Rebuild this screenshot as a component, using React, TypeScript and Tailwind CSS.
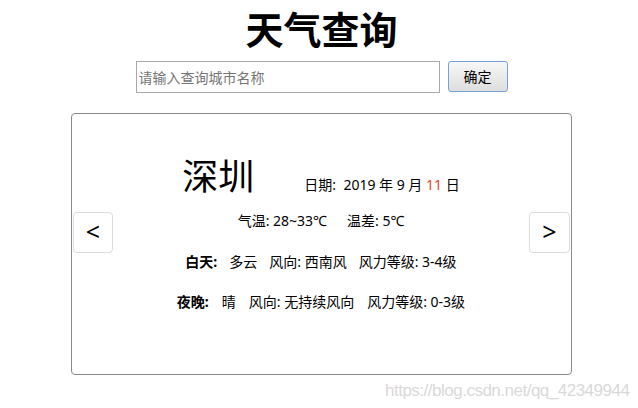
export default function App() {
  return (
    <div
      className="relative h-[408px] w-full bg-white pl-[5px] text-black"
      style={{ fontFamily: '"Noto Sans", "Noto Sans CJK SC", sans-serif' }}
    >
      {/* Title */}
      <h1
        className="pt-[3px] text-center text-[38px] font-bold leading-[50px]"
        style={{ fontFamily: '"Noto Sans CJK SC", sans-serif' }}
      >
        天气查询
      </h1>

      {/* Search row */}
      <div className="mt-[8px] flex items-center justify-center gap-[8px]">
        <input
          type="text"
          placeholder="请输入查询城市名称"
          className="h-[32px] w-[304px] border border-[#a9a9a9] px-[2px] text-[14px] outline-none placeholder:text-[#757575]"
        />
        <button className="-mt-[2px] h-[31px] w-[60px] rounded-[3px] border border-[#7a9fd6] bg-linear-to-b from-[#f7f7f7] to-[#dedede] text-[14px]">
          确定
        </button>
      </div>

      {/* Weather card */}
      <div className="mx-auto mt-[20px] flex h-[262px] w-[501px] rounded-[4px] border border-[#8a8a8a] px-[1px]">
        <button className="mt-[98px] flex h-[41px] w-[40px] shrink-0 items-center justify-center rounded-[4px] border border-[#dcdcdc] bg-white pb-[2px] text-[25px] leading-none">
          &lt;
        </button>

        <div className="flex flex-1 flex-col items-center pt-[38px] text-[14px]">
          <div className="flex items-baseline gap-[50px]">
            <span className="text-[36px] leading-[44px]" style={{ fontFamily: '"Noto Sans CJK SC", sans-serif' }}>
              深圳
            </span>
            <span>
              日期:&nbsp;&nbsp;2019 年 9 月 <span className="text-[#e3432b]">11</span> 日
            </span>
          </div>

          <div className="mt-[14px] flex gap-[20px]">
            <span>气温: 28~33℃</span>
            <span>温差: 5℃</span>
          </div>

          <div className="mt-[20px] flex gap-[12px]">
            <span className="font-bold">白天:</span>
            <span>多云</span>
            <span>风向: 西南风</span>
            <span>风力等级: 3-4级</span>
          </div>

          <div className="mt-[19px] flex gap-[13px]">
            <span className="font-bold">夜晚:</span>
            <span>晴</span>
            <span>风向: 无持续风向</span>
            <span>风力等级: 0-3级</span>
          </div>
        </div>

        <button className="mt-[98px] flex h-[41px] w-[41px] shrink-0 items-center justify-center rounded-[4px] border border-[#dcdcdc] bg-white pb-[2px] text-[25px] leading-none">
          &gt;
        </button>
      </div>

      {/* Watermark */}
      <div
        className="absolute left-[385px] top-[378px] text-[17px] tracking-[-0.5px] text-[#d9d9d9]"
        style={{ fontFamily: '"Liberation Sans", Arial, sans-serif' }}
      >
        https://blog.csdn.net/qq_42349944
      </div>
    </div>
  );
}
